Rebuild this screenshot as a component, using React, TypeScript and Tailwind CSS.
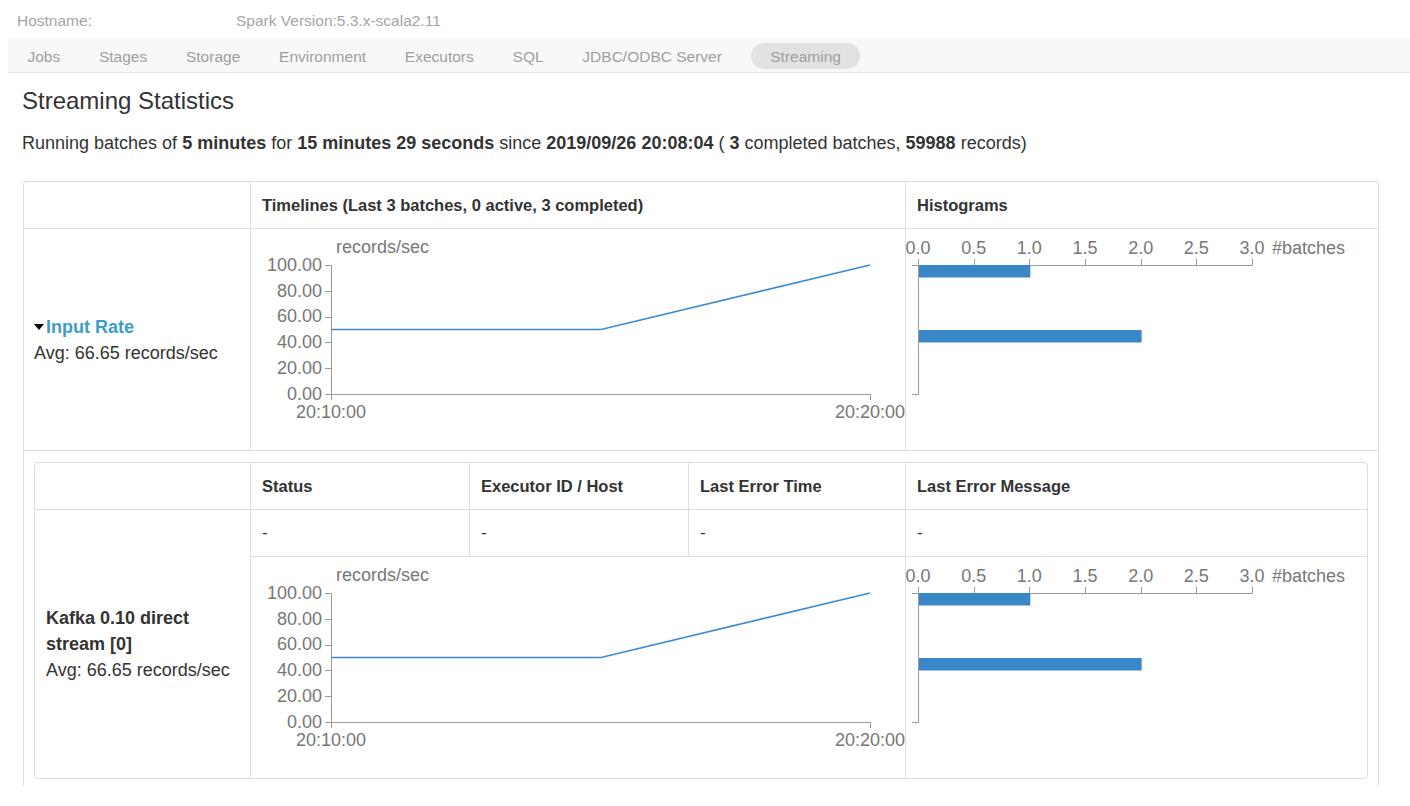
import React from 'react';

const AXIS = '#9a9a9a';
const LABEL = '#777';
const BLUE = '#3a87c7';
const FONT = "'Liberation Sans', Arial, sans-serif";

// timeline chart drawn in its cell's own coordinates
function Timeline() {
    const x0 = 80, x1 = 619, yT = 36, yB = 165;
    const y = (v: number) => yB - (v / 100) * (yB - yT);
    const ticks = [0, 20, 40, 60, 80, 100];
    return (
        <svg width={654} height={221} className="block" fontFamily={FONT} fontSize={18}>
            <text x={85} y={24} fill={LABEL}>records/sec</text>
            <path d={`M${x0 - 6},${yT + 0.5}H${x0 + 0.5}V${yB + 0.5}H${x0 - 6}`} stroke={AXIS} fill="none" />
            {ticks.map((t) => (
                <g key={t}>
                    <line x1={x0 - 6} x2={x0} y1={Math.round(y(t)) + 0.5} y2={Math.round(y(t)) + 0.5} stroke={AXIS} />
                    <text x={x0 - 9} y={y(t)} dy="0.32em" textAnchor="end" fill={LABEL}>{t.toFixed(2)}</text>
                </g>
            ))}
            <path d={`M${x0 + 0.5},${yB + 6}V${yB + 0.5}H${x1 + 0.5}V${yB + 6}`} stroke={AXIS} fill="none" />
            <text x={x0} y={189} textAnchor="middle" fill={LABEL}>20:10:00</text>
            <text x={x1} y={189} textAnchor="middle" fill={LABEL}>20:20:00</text>
            <polyline points={`${x0},${y(50)} 350,${y(50)} ${x1},${y(100)}`} stroke="#3d8bd1" strokeWidth={1.6} fill="none" />
        </svg>
    );
}

function Histogram() {
    const x0 = 12, unit = 111.33, yT = 36, yB = 165;
    const ticks = [0, 0.5, 1, 1.5, 2, 2.5, 3];
    return (
        <svg width={472} height={221} className="block" fontFamily={FONT} fontSize={18}>
            {ticks.map((t) => {
                const x = Math.round(x0 + t * unit) + 0.5;
                return (
                    <g key={t}>
                        <line x1={x} x2={x} y1={yT} y2={yT - 6} stroke={AXIS} />
                        <text x={x0 + t * unit} y={25} textAnchor="middle" fill={LABEL}>{t.toFixed(1)}</text>
                    </g>
                );
            })}
            <path d={`M${x0 + 0.5},${yT + 0.5}H${Math.round(x0 + 3 * unit) + 0.5}`} stroke={AXIS} fill="none" />
            <path d={`M${x0 - 6},${yT + 0.5}H${x0 + 0.5}V${yB + 0.5}H${x0 - 6}`} stroke={AXIS} fill="none" />
            <text x={366} y={25} fill={LABEL}>#batches</text>
            <rect x={x0 + 1} y={yT} width={unit} height={12.5} fill={BLUE} />
            <rect x={x0 + 1} y={101} width={unit * 2} height={12.5} fill={BLUE} />
        </svg>
    );
}

const tabs = ['Jobs', 'Stages', 'Storage', 'Environment', 'Executors', 'SQL', 'JDBC/ODBC Server'];

export default function App() {
    return (
        <div className="h-[806px] overflow-hidden bg-white font-['Liberation_Sans',Arial,sans-serif] text-[#333]">
            <div className="flex h-[38px] items-center pt-[4px] pl-[17px] text-[15.5px] text-[#a5a5a5]">
                <span className="w-[219px]">Hostname:</span>
                <span>Spark Version:5.3.x-scala2.11</span>
            </div>

            <nav className="ml-[8px] flex h-[35px] items-center border-b border-[#e3e3e3] bg-[#f8f8f8] pt-[1px] text-[15.5px] text-[#9e9e9e]">
                {tabs.map((t) => (
                    <a key={t} className="px-[19.4px] pt-[2px]">{t}</a>
                ))}
                <a className="ml-[10px] flex h-[26px] items-center rounded-full bg-[#e2e2e2] px-[19px] pt-[2px]">Streaming</a>
            </nav>

            <h3 className="mt-[13px] pl-[22px] text-[24px] leading-[29px] font-light">Streaming Statistics</h3>
            <p className="mt-[15px] pl-[22px] text-[18px] leading-[26px]">
                Running batches of <b>5 minutes</b> for <b>15 minutes 29 seconds</b> since <b>2019/09/26 20:08:04</b> ( <b>3</b> completed batches, <b>59988</b> records)
            </p>

            <div className="mt-[25px] ml-[23px] w-[1356px] rounded-t-[4px] border border-b-0 border-[#dedede]">
                <div className="grid grid-cols-[226px_655px_473px] grid-rows-[47px_222px_335px]">
                    <div className="border-b border-[#dedede]" />
                    <div className="flex items-center border-b border-l border-[#dedede] pl-[11px] text-[16.5px] font-bold">
                        Timelines (Last 3 batches, 0 active, 3 completed)
                    </div>
                    <div className="flex items-center border-b border-l border-[#dedede] pl-[11px] text-[16.5px] font-bold">
                        Histograms
                    </div>

                    <div className="flex flex-col justify-center border-b border-[#dedede] pl-[10px] text-[18px] leading-[26px]">
                        <div className="flex items-center">
                            <span className="mr-[2px] inline-block h-0 w-0 border-x-[5px] border-t-[6px] border-x-transparent border-t-black" />
                            <a className="font-bold text-[#3d9cc9]">Input Rate</a>
                        </div>
                        <div>Avg: 66.65 records/sec</div>
                    </div>
                    <div className="border-b border-l border-[#dedede]"><Timeline /></div>
                    <div className="border-b border-l border-[#dedede]"><Histogram /></div>

                    <div className="col-span-3 pt-[11px] pl-[10px]">
                        <div className="w-[1334px] rounded-[4px] border border-[#dedede]">
                            <div className="grid grid-cols-[215px_219px_219px_217px_463px] grid-rows-[47px_47px_221px] text-[16.5px]">
                                <div className="border-b border-[#dedede]" />
                                {['Status', 'Executor ID / Host', 'Last Error Time', 'Last Error Message'].map((h) => (
                                    <div key={h} className="flex items-center border-b border-l border-[#dedede] pl-[11px] font-bold">{h}</div>
                                ))}

                                <div className="row-span-2 flex flex-col justify-center pl-[11px] text-[18px] leading-[26px]">
                                    <div className="font-bold">Kafka 0.10 direct stream [0]</div>
                                    <div>Avg: 66.65 records/sec</div>
                                </div>
                                {[1, 2, 3, 4].map((i) => (
                                    <div key={i} className="flex items-center border-b border-l border-[#dedede] pl-[11px] text-[17px]">-</div>
                                ))}
                                <div className="col-span-3 border-l border-[#dedede]"><Timeline /></div>
                                <div className="border-l border-[#dedede]"><Histogram /></div>
                            </div>
                        </div>
                    </div>
                </div>
            </div>
        </div>
    );
}
